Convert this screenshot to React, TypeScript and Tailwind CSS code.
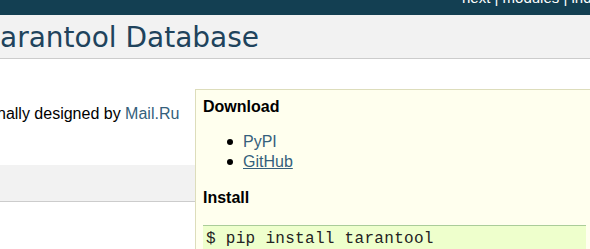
export default function App() {
  return (
    <div className="w-[590px] h-[249px] overflow-hidden bg-white" style={{ fontFamily: '"Liberation Sans", Arial, sans-serif' }}>
      <div className="h-[15px] bg-[#133f52] overflow-hidden relative">
        <div className="absolute left-[462px] top-[-12px] whitespace-nowrap text-white text-[15px] leading-[20px]">
          next | modules | index
        </div>
      </div>
      <div className="bg-[#f2f2f2] border-b border-[#cccccc] pt-[7px] pb-[4px] whitespace-nowrap">
        <h1 className="ml-[-11px] text-[28px] leading-[32px] text-[#20435c]" style={{ fontFamily: '"DejaVu Sans", sans-serif' }}>
          tarantool Database
        </h1>
      </div>
      <div className="flex">
        <div className="w-[195px] flex-none">
          <p className="mt-[45px] ml-[-3px] whitespace-nowrap text-[16px] leading-[20px] text-black">
            nally designed by <span className="text-[#355f7c]">Mail.Ru</span>
          </p>
          <div className="mt-[41px] h-[37px] bg-[#f2f2f2] border-b border-[#cccccc]" />
        </div>
        <div className="flex-none w-[398px] mt-[30px] bg-[#ffffee] border-t border-l border-[#ddddbb] px-[7px] pt-[7px] h-[300px] text-[16px] leading-[20px] text-black">
          <div className="font-bold">Download</div>
          <ul className="mt-[15px]">
            <li className="flex items-center">
              <span className="ml-[24px] w-[6px] h-[6px] rounded-full bg-black" />
              <span className="ml-[10px] text-[#355f7c]">PyPI</span>
            </li>
            <li className="flex items-center">
              <span className="ml-[24px] w-[6px] h-[6px] rounded-full bg-black" />
              <span className="ml-[10px] text-[#355f7c] underline">GitHub</span>
            </li>
          </ul>
          <div className="mt-[16px] font-bold">Install</div>
          <div className="mt-[17px] bg-[#eeffcc] border-t border-b border-[#aacc99] pl-[3px] pt-[5px] pb-[5px]">
            <div className="whitespace-pre text-[16px] leading-[17px] tracking-[0.3px] text-[#222222]" style={{ fontFamily: '"Liberation Mono", "Courier New", monospace' }}>$ pip install tarantool</div>
          </div>
        </div>
      </div>
    </div>
  );
}
